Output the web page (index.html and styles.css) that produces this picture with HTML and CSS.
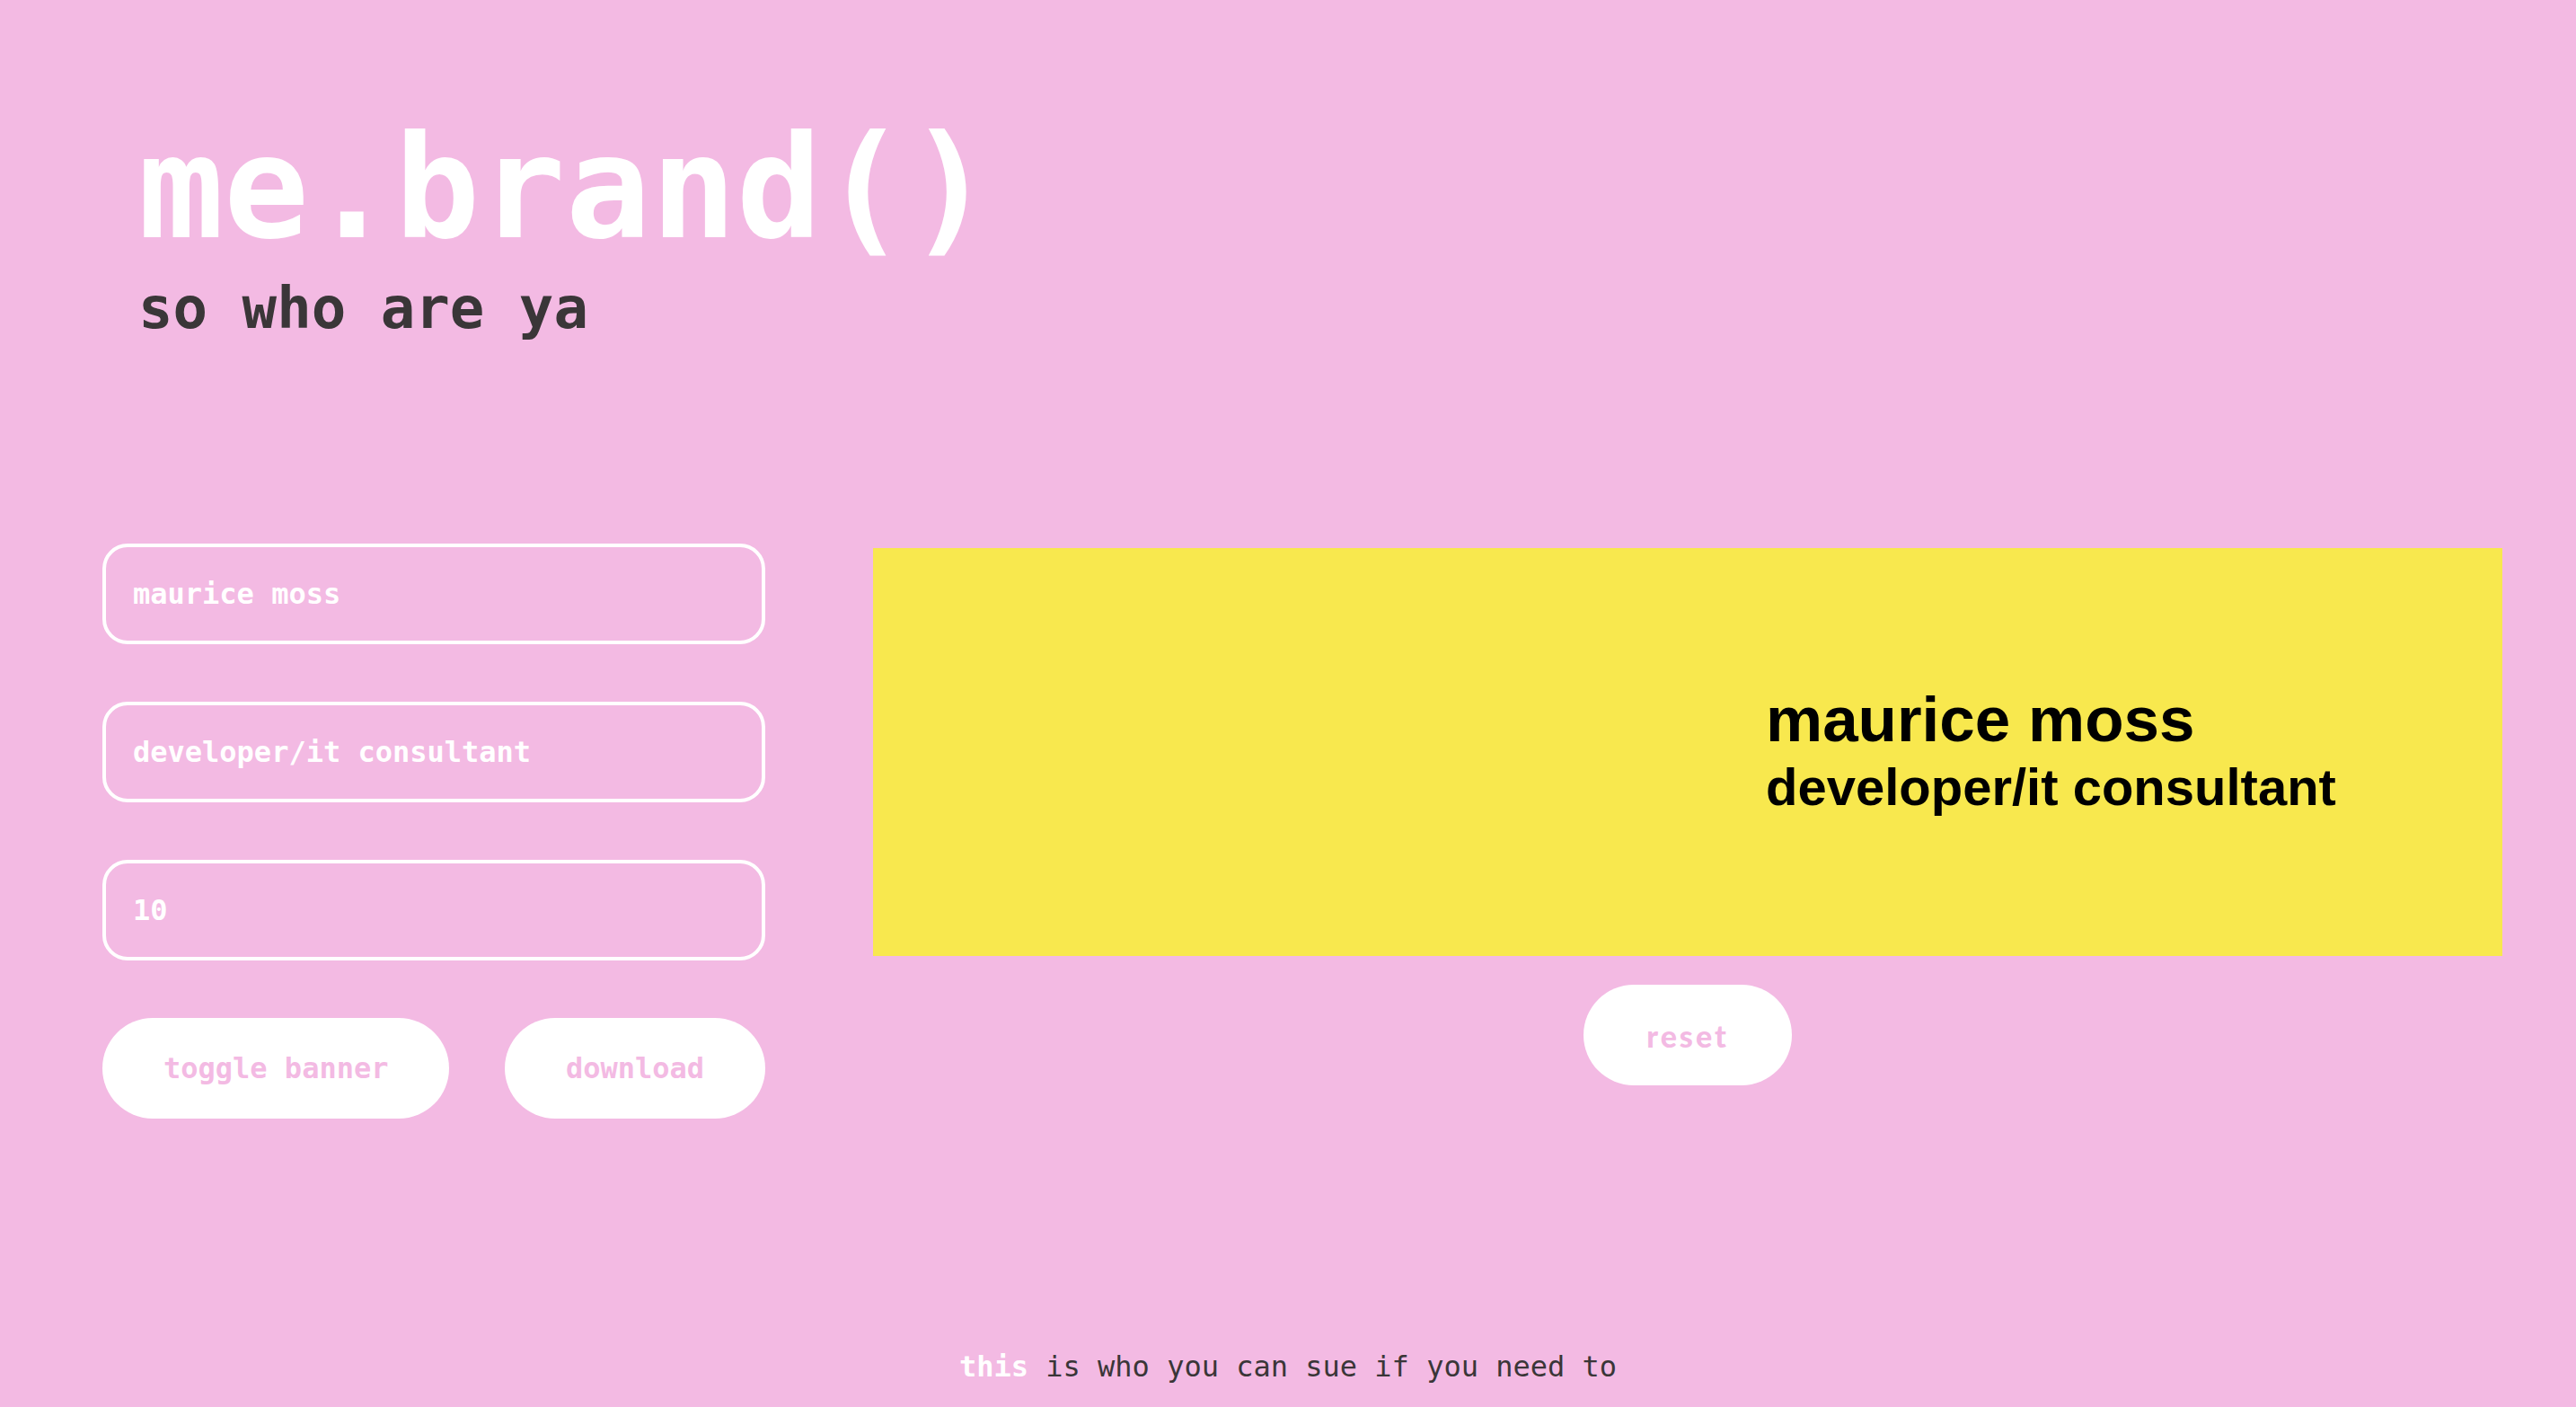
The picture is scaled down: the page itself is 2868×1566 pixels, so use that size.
FILE: index.html
```html
<!DOCTYPE html>
<html lang="en">
<head>
<meta charset="utf-8">
<title>me.brand()</title>
<link rel="stylesheet" href="styles.css">
</head>
<body>
  <header class="hero">
    <h1 class="hero-title">me.brand()</h1>
    <p class="hero-tagline">so who are ya</p>
  </header>

  <main class="workspace">
    <form class="controls">
      <input class="field" type="text" value="maurice moss">
      <input class="field" type="text" value="developer/it consultant">
      <input class="field" type="text" value="10">
      <div class="actions">
        <button type="button" class="pill">toggle banner</button>
        <button type="button" class="pill">download</button>
      </div>
    </form>

    <section class="preview">
      <div class="banner">
        <div class="banner-text">
          <div class="banner-name">maurice moss</div>
          <div class="banner-role">developer/it consultant</div>
        </div>
      </div>
      <button type="button" class="reset">reset</button>
    </section>
  </main>

  <footer class="footer">
    <span class="footer-strong">this</span> is who you can sue if you need to
  </footer>
</body>
</html>
```

FILE: styles.css
```css
* {
  box-sizing: border-box;
}

html, body {
  margin: 0;
  padding: 0;
}

body {
  width: 2868px;
  height: 1566px;
  background: #f3bae3;
  font-family: "DejaVu Sans Mono", "Liberation Mono", monospace;
  display: flex;
  flex-direction: column;
  overflow: hidden;
}

.hero {
  padding: 130px 0 0 152px;
}

.hero-title {
  margin: 0 0 0 2px;
  font-size: 158px;
  line-height: 158px;
  font-weight: bold;
  color: #ffffff;
}

.hero-tagline {
  margin: 23px 0 0 2px;
  font-size: 64px;
  line-height: 64px;
  font-weight: bold;
  color: #3a3638;
}

.workspace {
  display: flex;
  align-items: flex-start;
  gap: 120px;
  padding: 0 82px 0 114px;
  margin-top: 230px;
}

.controls {
  width: 738px;
  flex: none;
  display: flex;
  flex-direction: column;
  gap: 64px;
  margin: 0;
}

.field {
  display: block;
  width: 100%;
  height: 112px;
  border: 4px solid #ffffff;
  border-radius: 28px;
  background: transparent;
  padding: 0 30px;
  font-family: "DejaVu Sans Mono", "Liberation Mono", monospace;
  font-size: 32px;
  font-weight: bold;
  color: #ffffff;
  outline: none;
}

.actions {
  display: flex;
  justify-content: space-between;
}

.pill {
  height: 112px;
  border: none;
  border-radius: 56px;
  background: #ffffff;
  padding: 0 68px;
  font-family: "DejaVu Sans Mono", "Liberation Mono", monospace;
  font-size: 32px;
  font-weight: bold;
  color: #f3bae3;
  cursor: pointer;
}

.preview {
  flex: 1;
  display: flex;
  flex-direction: column;
  align-items: center;
  padding-top: 5px;
}

.banner {
  width: 100%;
  height: 454px;
  background: #f8e84e;
  display: flex;
  align-items: center;
  padding-left: 994px;
}

.banner-text {
  font-family: "Liberation Sans", Arial, sans-serif;
  font-weight: bold;
  color: #000000;
}

.banner-name {
  font-size: 71px;
  line-height: 70px;
}

.banner-role {
  margin-top: 8px;
  font-size: 58px;
  line-height: 64px;
}

.reset {
  margin-top: 32px;
  width: 232px;
  height: 112px;
  border: none;
  border-radius: 56px;
  background: #ffffff;
  font-family: Lato, "Open Sans", sans-serif;
  font-size: 34px;
  font-weight: 900;
  letter-spacing: 3px;
  color: #f3bae3;
  cursor: pointer;
}

.footer {
  margin-top: auto;
  padding-bottom: 29px;
  text-align: center;
  font-size: 32px;
  line-height: 32px;
  color: #3a3638;
}

.footer-strong {
  font-weight: bold;
  color: #ffffff;
}
```
